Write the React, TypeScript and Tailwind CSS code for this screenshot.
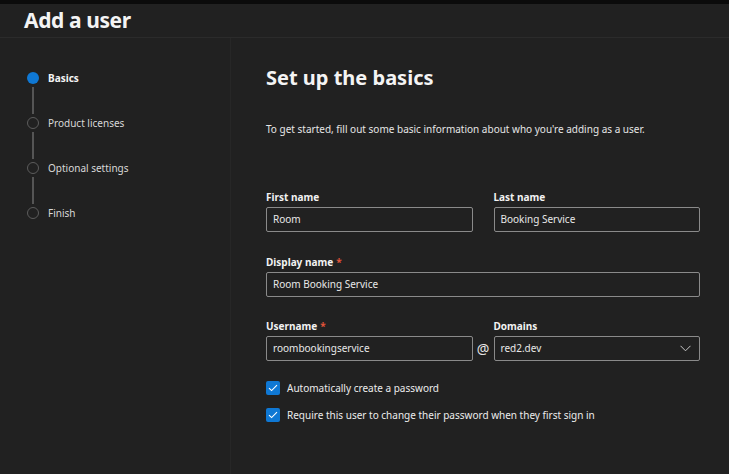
import React from 'react';

const steps = [
  { label: 'Basics', active: true },
  { label: 'Product licenses', active: false },
  { label: 'Optional settings', active: false },
  { label: 'Finish', active: false },
];

const Field: React.FC<{ label: string; value: string; required?: boolean; select?: boolean }> = ({
  label,
  value,
  required,
  select,
}) => (
  <div className="flex flex-col flex-1 min-w-0">
    <label className="text-[10px] leading-[16px] font-bold text-[#f2f2f2]">
      {label}
      {required && <span className="text-[#e0533a] ml-[3px]">*</span>}
    </label>
    <div className="mt-[2px] h-[25px] border border-[#8a8a8a] rounded-[2px] px-[6px] flex items-center justify-between text-[10px] text-[#e8e8e8]">
      <span>{value}</span>
      {select && (
        <svg width="11" height="7" viewBox="0 0 11 7" fill="none" className="mr-[2px]">
          <path d="M0.5 0.8 L5.5 5.8 L10.5 0.8" stroke="#c8c8c8" strokeWidth="1" />
        </svg>
      )}
    </div>
  </div>
);

const Check: React.FC<{ label: string }> = ({ label }) => (
  <div className="flex items-center gap-[7px] h-[14px]">
    <div className="w-[14px] h-[14px] rounded-[2px] bg-[#0f78d4] flex items-center justify-center">
      <svg width="10" height="8" viewBox="0 0 10 8" fill="none">
        <path d="M1 4.2 L3.6 6.6 L9 1.2" stroke="white" strokeWidth="1.1" />
      </svg>
    </div>
    <span className="text-[10px] text-[#ececec]">{label}</span>
  </div>
);

export default function App() {
  return (
    <div
      className="w-[729px] h-[474px] bg-[#212121] flex flex-col overflow-hidden"
      style={{ fontFamily: '"Noto Sans", "Open Sans", sans-serif' }}
    >
      <div className="h-[4px] bg-[#0b0b0b]" />
      <header className="h-[34px] border-b border-[#2b2b2b] flex items-center px-[24px]">
        <h1 className="text-[21px] font-bold text-[#f4f4f4] leading-none tracking-[-0.4px]">Add a user</h1>
      </header>
      <div className="flex flex-1">
        <nav className="w-[231px] border-r border-[#272727] pt-[34px] pl-[27px]">
          {steps.map((s, i) => (
            <div key={s.label}>
              <div className="flex items-center gap-[9px] h-[12px]">
                {s.active ? (
                  <div className="w-[12px] h-[12px] rounded-full bg-[#0f78d4]" />
                ) : (
                  <div className="w-[12px] h-[12px] rounded-full border-[1.5px] border-[#5c5c5c]" />
                )}
                <span
                  className={`text-[10px] leading-none ${
                    s.active ? 'font-bold text-[#f4f4f4]' : 'text-[#d8d8d8]'
                  }`}
                >
                  {s.label}
                </span>
              </div>
              {i < steps.length - 1 && <div className="w-[1.5px] h-[27px] bg-[#555555] ml-[5.25px] my-[3px]" />}
            </div>
          ))}
        </nav>
        <main className="flex-1 pl-[35px] pr-[29px] pt-[26px]">
          <h2 className="text-[20px] leading-[28px] font-bold text-[#f4f4f4]">Set up the basics</h2>
          <p className="mt-[29px] text-[10px] leading-[16px] text-[#e6e6e6]">
            To get started, fill out some basic information about who you're adding as a user.
          </p>
          <div className="mt-[52px] flex gap-[21px]">
            <Field label="First name" value="Room" />
            <Field label="Last name" value="Booking Service" />
          </div>
          <div className="mt-[22px] flex">
            <Field label="Display name" value="Room Booking Service" required />
          </div>
          <div className="mt-[21px] flex items-end">
            <Field label="Username" value="roombookingservice" required />
            <span className="w-[21px] h-[25px] flex items-center justify-center text-[14px] text-[#e6e6e6]">@</span>
            <Field label="Domains" value="red2.dev" select />
          </div>
          <div className="mt-[20px] flex flex-col gap-[13px]">
            <Check label="Automatically create a password" />
            <Check label="Require this user to change their password when they first sign in" />
          </div>
        </main>
      </div>
    </div>
  );
}
